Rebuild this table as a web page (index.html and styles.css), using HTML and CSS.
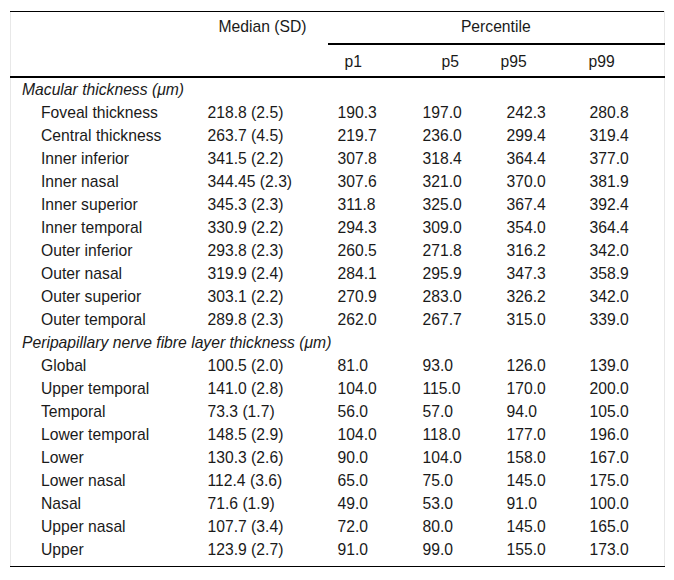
FILE: index.html
```html
<!DOCTYPE html>
<html>
<head>
<meta charset="utf-8">
<link rel="stylesheet" href="styles.css">
</head>
<body>
<div class="wrap">
<table class="tbl">
<colgroup>
<col class="c-label"><col class="c-med"><col class="c-p1"><col class="c-p5"><col class="c-p95"><col class="c-p99">
</colgroup>
<thead>
<tr class="h1">
<th></th>
<th class="center">Median (SD)</th>
<th colspan="4" class="center pct">Percentile</th>
</tr>
<tr class="h2">
<th></th>
<th></th>
<th class="hp1">p1</th>
<th class="hp5">p5</th>
<th class="hp95">p95</th>
<th class="hp99">p99</th>
</tr>
</thead>
<tbody>
<tr class="sec"><td colspan="6">Macular thickness (μm)</td></tr>
<tr><td class="sub">Foveal thickness</td><td>218.8 (2.5)</td><td>190.3</td><td>197.0</td><td>242.3</td><td>280.8</td></tr>
<tr><td class="sub">Central thickness</td><td>263.7 (4.5)</td><td>219.7</td><td>236.0</td><td>299.4</td><td>319.4</td></tr>
<tr><td class="sub">Inner inferior</td><td>341.5 (2.2)</td><td>307.8</td><td>318.4</td><td>364.4</td><td>377.0</td></tr>
<tr><td class="sub">Inner nasal</td><td>344.45 (2.3)</td><td>307.6</td><td>321.0</td><td>370.0</td><td>381.9</td></tr>
<tr><td class="sub">Inner superior</td><td>345.3 (2.3)</td><td>311.8</td><td>325.0</td><td>367.4</td><td>392.4</td></tr>
<tr><td class="sub">Inner temporal</td><td>330.9 (2.2)</td><td>294.3</td><td>309.0</td><td>354.0</td><td>364.4</td></tr>
<tr><td class="sub">Outer inferior</td><td>293.8 (2.3)</td><td>260.5</td><td>271.8</td><td>316.2</td><td>342.0</td></tr>
<tr><td class="sub">Outer nasal</td><td>319.9 (2.4)</td><td>284.1</td><td>295.9</td><td>347.3</td><td>358.9</td></tr>
<tr><td class="sub">Outer superior</td><td>303.1 (2.2)</td><td>270.9</td><td>283.0</td><td>326.2</td><td>342.0</td></tr>
<tr><td class="sub">Outer temporal</td><td>289.8 (2.3)</td><td>262.0</td><td>267.7</td><td>315.0</td><td>339.0</td></tr>
<tr class="sec"><td colspan="6">Peripapillary nerve fibre layer thickness (μm)</td></tr>
<tr><td class="sub">Global</td><td>100.5 (2.0)</td><td>81.0</td><td>93.0</td><td>126.0</td><td>139.0</td></tr>
<tr><td class="sub">Upper temporal</td><td>141.0 (2.8)</td><td>104.0</td><td>115.0</td><td>170.0</td><td>200.0</td></tr>
<tr><td class="sub">Temporal</td><td>73.3 (1.7)</td><td>56.0</td><td>57.0</td><td>94.0</td><td>105.0</td></tr>
<tr><td class="sub">Lower temporal</td><td>148.5 (2.9)</td><td>104.0</td><td>118.0</td><td>177.0</td><td>196.0</td></tr>
<tr><td class="sub">Lower</td><td>130.3 (2.6)</td><td>90.0</td><td>104.0</td><td>158.0</td><td>167.0</td></tr>
<tr><td class="sub">Lower nasal</td><td>112.4 (3.6)</td><td>65.0</td><td>75.0</td><td>145.0</td><td>175.0</td></tr>
<tr><td class="sub">Nasal</td><td>71.6 (1.9)</td><td>49.0</td><td>53.0</td><td>91.0</td><td>100.0</td></tr>
<tr><td class="sub">Upper nasal</td><td>107.7 (3.4)</td><td>72.0</td><td>80.0</td><td>145.0</td><td>165.0</td></tr>
<tr class="last"><td class="sub">Upper</td><td>123.9 (2.7)</td><td>91.0</td><td>99.0</td><td>155.0</td><td>173.0</td></tr>
</tbody>
</table>
</div>
</body>
</html>
```

FILE: styles.css
```css
html, body {
  margin: 0;
  padding: 0;
  background: #ffffff;
}

.wrap {
  padding: 11px 10px 0 10px;
}

.tbl {
  width: 654px;
  table-layout: fixed;
  border-collapse: collapse;
  font-family: "Liberation Sans", Arial, sans-serif;
  font-size: 15.7px;
  color: #1a1a1a;
  border-top: 1px solid #000;
  border-bottom: 1px solid #000;
  border-left: 1px solid #e8e8e8;
  border-right: 1px solid #e8e8e8;
}

.c-label { width: 187px; }
.c-med { width: 130px; }
.c-p1 { width: 85px; }
.c-p5 { width: 84px; }
.c-p95 { width: 83px; }
.c-p99 { width: 85px; }

.tbl th {
  font-weight: normal;
  padding: 0 0 0 10px;
  text-align: left;
}

.tbl td {
  padding: 0 0 0 10px;
  height: 23px;
  line-height: 23px;
  white-space: nowrap;
}

.h1 th {
  height: 28px;
  vertical-align: top;
  padding-top: 3px;
  line-height: 23px;
}

.h1 th.center {
  text-align: center;
  padding-left: 0;
}

.h1 th.pct {
  border-bottom: 2px solid #000;
}

.h2 th {
  height: 26px;
  vertical-align: top;
  padding-top: 5px;
  line-height: 23px;
  border-bottom: 2px solid #000;
}

.h2 th.hp1 { padding-left: 17px; }
.h2 th.hp5 { padding-left: 29px; }
.h2 th.hp95 { padding-left: 4px; }
.h2 th.hp99 { padding-left: 9px; }

.sec td {
  font-style: italic;
  padding-left: 11px;
}

.tbl td.sub {
  padding-left: 30px;
}

.last td {
  height: 28px;
  vertical-align: top;
}
```
